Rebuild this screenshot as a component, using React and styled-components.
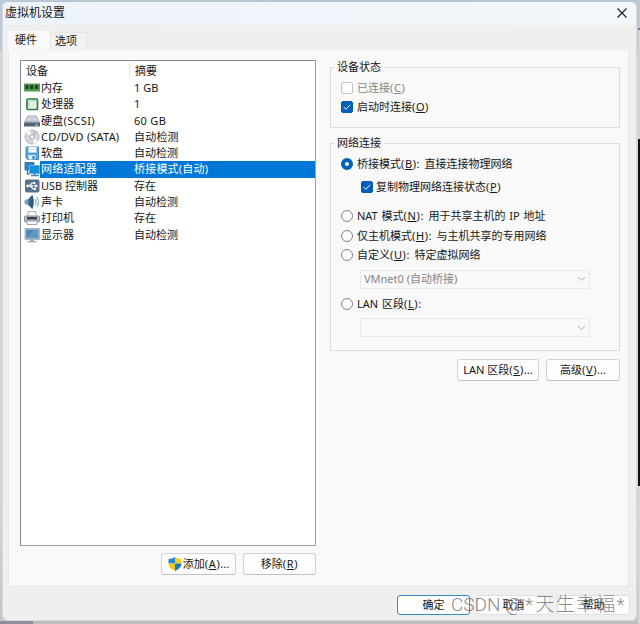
import styled, { createGlobalStyle, css } from 'styled-components';

const devices = [
  { icon: 'memory', name: '内存', summary: '1 GB' },
  { icon: 'cpu', name: '处理器', summary: '1' },
  { icon: 'disk', name: '硬盘(SCSI)', summary: '60 GB', tracking: 0.3 },
  { icon: 'cd', name: 'CD/DVD (SATA)', summary: '自动检测', tracking: 0.2 },
  { icon: 'floppy', name: '软盘', summary: '自动检测' },
  { icon: 'network', name: '网络适配器', summary: '桥接模式(自动)', tracking: 0.2, selected: true },
  { icon: 'usb', name: 'USB 控制器', summary: '存在' },
  { icon: 'sound', name: '声卡', summary: '自动检测' },
  { icon: 'printer', name: '打印机', summary: '存在' },
  { icon: 'display', name: '显示器', summary: '自动检测' },
];

const drawings = {
  memory: (
    <>
      <path d="M0 3.5h16v8H0z" fill="#4f9d50" />
      <path d="M1.5 5h3v4h-3zM6.2 5h3v4h-3zM11 5h3v4h-3z" fill="#1f4425" />
      <path d="M1 11.5h14" stroke="#b5c88a" strokeDasharray="1 1" />
    </>
  ),
  cpu: (
    <>
      <rect x="3" y="3" width="10.5" height="10.5" rx="1" fill="#e3efe1" stroke="#238048" strokeWidth="1.7" />
      <path d="M5 11V5h6" fill="none" stroke="#b5d3b5" />
    </>
  ),
  disk: (
    <>
      <path d="M3.5 2.5h9L16 9.5H0z" fill="#a5b2c0" />
      <path d="M4 3.5h8l2 4.5h-12z" fill="#c9d2dc" />
      <path d="M0 9h16v4.5H0z" fill="#566472" />
      <path d="M0 9.5h16" stroke="#8c9ba9" />
      <path d="M11 12h3" stroke="#c9d9e4" />
    </>
  ),
  cd: (
    <>
      <circle cx="8" cy="8" r="7" fill="#d5d8dc" stroke="#b1b5bc" />
      <path d="M8 8L2 4a7 7 0 0 1 4-3zM8 8l6 4a7 7 0 0 1-4 3z" fill="#f7f8fa" />
      <path d="M8 8l5.5-4A7 7 0 0 0 10 1.5z" fill="#bfc2ce" />
      <circle cx="8" cy="8" r="2.4" fill="#edf0f3" stroke="#a5aab2" />
      <circle cx="8" cy="8" r=".8" fill="#fff" />
    </>
  ),
  floppy: (
    <>
      <path d="M2 2h12.5v12.5h-11L2 13z" fill="#5ba3dd" stroke="#3d8ac9" />
      <path d="M4.5 2h8v5.5h-8z" fill="#fff" />
      <path d="M5 4h7" stroke="#d3e4f2" />
      <path d="M4.5 10h7v4.5h-7z" fill="#e2eff9" />
      <path d="M8.5 11h2v3.5h-2z" fill="#3277b8" />
    </>
  ),
  network: (
    <>
      <path d="M1 1.5h9V9H1z" fill="#2b83c2" stroke="#3a78a8" />
      <path d="M5.5 4.5h10v8h-10z" fill="#168ed9" stroke="#5db4e8" />
      <path d="M10.5 12v2M7 14.5h8M3.5 9v4h2" stroke="#4a84b0" strokeWidth="1.5" fill="none" />
    </>
  ),
  usb: (
    <>
      <rect x="1" y="1.5" width="14.5" height="13" rx="2" fill="#56708a" />
      <path d="M3.5 8h9M5.5 8l2.5-3h2M6.5 8l2.5 3h2" stroke="#fff" strokeWidth="1.2" fill="none" />
      <path d="M11.5 6l2.5 2-2.5 2zM9.3 4h2v2h-2zM10 10h2v2h-2z" fill="#fff" />
      <circle cx="3.7" cy="8" r="1.4" fill="#fff" />
    </>
  ),
  sound: (
    <>
      <path d="M1 5.5Q0 8 1 10.5h2.5L8.5 15V1L3.5 5.5z" fill="#7ba0bf" />
      <path d="M4 5.5L8.5 1v14L4 10.5z" fill="#3f6f9a" />
      <ellipse cx="8" cy="8" rx="1.7" ry="6.5" fill="#2d5680" />
      <path d="M11 5q2 3 0 6M12.8 3q3.4 5 0 10" fill="none" stroke="#82b4d8" strokeWidth="1.3" />
    </>
  ),
  printer: (
    <>
      <path d="M4 1.5h8V7H4z" fill="#f8f9fb" stroke="#abb0b8" />
      <rect x=".5" y="6" width="15" height="6" rx="1" fill="#b4bac2" stroke="#8a919b" />
      <path d="M3 7h10v2.5H3z" fill="#3c434c" />
      <path d="M3 11h10v3.5H3z" fill="#f4f6f8" stroke="#9da3ac" />
    </>
  ),
  display: (
    <>
      <path d="M1 1.5h14.5v11H1z" fill="#8fb0c8" stroke="#a3b8c6" />
      <path d="M2.5 3h11.5v8h-11.5z" fill="#4784b2" />
      <path d="M2.5 11l7-8h4.5v8z" fill="#5f98c1" />
      <path d="M6 12.5h4V14H6zM3.5 14h9v1.2h-9z" fill="#9dadb9" />
    </>
  ),
};

const DeviceIcon = ({ name }) => (
  <svg width="16" height="16" viewBox="0 0 16 16">{drawings[name]}</svg>
);

const Shield = () => (
  <svg width="14" height="14" viewBox="0 0 14 14">
    <path d="M7 0Q4 2 .5 2v4.5H7z" fill="#2788d1" />
    <path d="M7 0q3 2 6.5 2v4.5H7z" fill="#f9cf1d" />
    <path d="M.5 6.5H7V14Q1 11.5.5 6.5z" fill="#f5c51c" />
    <path d="M7 6.5h6.5Q13 11.5 7 14z" fill="#1878c5" />
  </svg>
);

const Tick = () => (
  <svg width="12" height="12" viewBox="0 0 12 12">
    <path d="M2.7 6.1l2.2 2.2 4.3-4.5" fill="none" stroke="#fff" strokeWidth="1" />
  </svg>
);

const Chevron = () => (
  <svg width="9" height="6" viewBox="0 0 9 6">
    <path d="M1 1l3.5 3.5L8 1" fill="none" stroke="#b4b4b4" />
  </svg>
);

// label text with its mnemonic letter underlined
const Mnemonic = ({ before, letter, colon, after = '' }) => (
  <span>
    {before}
    <Key>(<u>{letter}</u>){colon && ': '}</Key>
    {after}
  </span>
);

const Check = ({ checked, disabled, children }) => (
  <Option $disabled={disabled}>
    <CheckMark $checked={checked}>{checked && <Tick />}</CheckMark>
    {children}
  </Option>
);

const Radio = ({ checked, children }) => (
  <Option>
    <RadioMark $checked={checked} />
    {children}
  </Option>
);

const App = () => (
  <>
    <GlobalStyle />
    <Desktop>
      <Dialog>
        <TitleBar>
          虚拟机设置
          <svg width="10" height="10" viewBox="0 0 10 10">
            <path d="M.5.5l9 9M9.5.5l-9 9" stroke="#222" strokeWidth="1.2" />
          </svg>
        </TitleBar>
        <Tabs>
          <Tab $active>硬件</Tab>
          <Tab>选项</Tab>
        </Tabs>
        <Panel>
          <Hardware>
            <DeviceList>
              <ListHeader>
                <span>设备</span>
                <span>摘要</span>
              </ListHeader>
              {devices.map((device) => (
                <Row key={device.icon}>
                  <DeviceIcon name={device.icon} />
                  <Cells $selected={device.selected} $tracking={device.tracking}>
                    <span>{device.name}</span>
                    <span>{device.summary}</span>
                  </Cells>
                </Row>
              ))}
            </DeviceList>
            <ListButtons>
              <Button $width={75}><Shield /><Mnemonic before="添加" letter="A" after="..." /></Button>
              <Button $width={73}><Mnemonic before="移除" letter="R" /></Button>
            </ListButtons>
          </Hardware>
          <Settings>
            <Group $height={68}>
              <legend>设备状态</legend>
              <Options>
                <Check disabled><Mnemonic before="已连接" letter="C" /></Check>
                <Check checked><Mnemonic before="启动时连接" letter="O" /></Check>
              </Options>
            </Group>
            <Group $height={215}>
              <legend>网络连接</legend>
              <Options>
                <Radio checked><Mnemonic before="桥接模式" letter="B" colon after="直接连接物理网络" /></Radio>
                <Replicate>
                  <Check checked><Mnemonic before="复制物理网络连接状态" letter="P" /></Check>
                </Replicate>
                <Radio><Mnemonic before="NAT 模式" letter="N" colon after="用于共享主机的 IP 地址" /></Radio>
                <Radio><Mnemonic before="仅主机模式" letter="H" colon after="与主机共享的专用网络" /></Radio>
                <Radio><Mnemonic before="自定义" letter="U" colon after="特定虚拟网络" /></Radio>
                <Combo>VMnet0 (自动桥接)<Chevron /></Combo>
                <Radio><Mnemonic before="LAN 区段" letter="L" colon /></Radio>
                <Combo><span /><Chevron /></Combo>
              </Options>
            </Group>
            <SettingsButtons>
              <Button $width={82}><Mnemonic before="LAN 区段" letter="S" after="..." /></Button>
              <Button $width={74}><Mnemonic before="高级" letter="V" after="..." /></Button>
            </SettingsButtons>
          </Settings>
        </Panel>
        <Footer>
          <FooterButton $primary>确定</FooterButton>
          <FooterButton>取消</FooterButton>
          <FooterButton>帮助</FooterButton>
        </Footer>
      </Dialog>
      <Watermark>CSDN <i>@*</i><span>天生幸福</span>*</Watermark>
    </Desktop>
  </>
);

const GlobalStyle = createGlobalStyle`
  * {
    box-sizing: border-box;
  }
  body {
    margin: 0;
    overflow: hidden;
    font-family: 'Noto Sans', 'Noto Sans CJK SC', sans-serif;
    font-size: 11px;
    line-height: 16px;
    color: #171717;
    white-space: nowrap;
  }
  svg {
    display: block;
    flex-shrink: 0;
  }
  u {
    text-underline-offset: 1px;
  }
`
const Desktop = styled.div`
  position: relative;
  width: 640px;
  height: 624px;
  padding: 1px 3px 3px 2px;
  background:
    linear-gradient(#c3c9d2 0 28px, #777b83 28px 30px, #d2d2d9 30px 139px, #111 139px 486px, #d5d5dc 486px) right / 2px 100% no-repeat,
    linear-gradient(90deg, #8f8f9b 0 33px, #bcbcc1 33px) bottom / 100% 3px no-repeat,
    linear-gradient(#b9c9da 0 50px, #d4d5d8 52px 500px, #c4c4c8);
`
const Dialog = styled.div`
  display: flex;
  flex-direction: column;
  height: 620px;
  border: 1px solid #d8dade;
  border-top-color: #b8c2cd;
  border-radius: 6px;
  background: #efefef;
  overflow: hidden;
`
const TitleBar = styled.div`
  display: flex;
  align-items: center;
  justify-content: space-between;
  height: 23px;
  padding: 0 9px 2px 2px;
  font-size: 12px;
  background: linear-gradient(90deg, #edf3f9, #f2f7fb);
`
const Tabs = styled.div`
  display: flex;
  align-items: flex-end;
  height: 25px;
  padding-left: 5px;
`
const Tab = styled.div`
  width: ${(props) => (props.$active ? '42px' : '37px')};
  height: ${(props) => (props.$active ? '19px' : '18px')};
  padding-left: ${(props) => (props.$active ? '6px' : '4px')};
  border: 1px solid ${(props) => (props.$active ? '#f9f9f9' : '#e5e5e5')};
  border-bottom: 0;
  background: ${(props) => (props.$active ? '#f9f9f9' : '#f2f2f2')};
`
const Panel = styled.div`
  display: flex;
  gap: 14px;
  height: 537px;
  margin: 0 7px 0 5px;
  padding: 9px 8px 0 11px;
  border: 1px solid #e7e7e7;
  border-top-color: #f4f4f4;
  background: #f9f9f9;
`
const Hardware = styled.div`
  width: 297px;
`
const DeviceList = styled.div`
  height: 486px;
  padding-top: 2px;
  border: 1px solid #8a8f98;
  border-color: #858a92 #a2a2a2 #a2a2a2 #858a92;
  background: #fff;
`
const columns = css`
  display: grid;
  grid-template-columns: 93px 1fr;
  align-items: center;
`
const ListHeader = styled.div`
  ${columns}
  grid-template-columns: 108px 1fr;
  height: 17px;
  padding: 0 0 2px 5px;

  span + span {
    margin-left: -5px;
    padding-left: 5px;
    border-left: 1px solid #e7e7e7;
  }
`
const Row = styled.div`
  display: flex;
  align-items: center;
  height: 16.27px;
  padding-left: 3px;
`
const Cells = styled.div`
  ${columns}
  flex: 1;
  height: 100%;
  padding-left: 1px;
  letter-spacing: ${(props) => props.$tracking || 0}px;
  color: ${(props) => (props.$selected ? '#fff' : '#171717')};
  background: ${(props) => (props.$selected ? '#0078d7' : 'transparent')};
`
const Key = styled.span`
  letter-spacing: 0.6px;
  white-space: pre;
`
const Button = styled.div`
  display: flex;
  align-items: center;
  justify-content: center;
  gap: 1px;
  width: ${(props) => props.$width}px;
  height: 22px;
  border: 1px solid #d2d2d2;
  border-bottom-color: #c2c2c2;
  border-radius: 3px;
  background: #fdfdfd;
`
const ListButtons = styled.div`
  display: flex;
  justify-content: flex-end;
  gap: 7px;
  padding-top: 7px;
`
const Settings = styled.div`
  width: 291px;
`
const Group = styled.fieldset`
  height: ${(props) => props.$height}px;
  margin: 0 0 8px;
  padding: 0;
  border: 1px solid #dcdcdc;

  legend {
    height: 14px;
    margin-left: 4px;
    padding: 0 3px 0 2px;
    line-height: 14px;
  }
`
const Options = styled.div`
  padding: 4px 0 0 10px;
`
const Option = styled.div`
  display: flex;
  align-items: center;
  gap: 4px;
  height: 19.4px;
  word-spacing: 1px;
  color: ${(props) => (props.$disabled ? '#858585' : '#171717')};
`
const CheckMark = styled.span`
  display: flex;
  align-items: center;
  justify-content: center;
  width: 12px;
  height: 12px;
  border: 1px solid ${(props) => (props.$checked ? '#005fb8' : '#c6c6c6')};
  border-radius: 2px;
  background: ${(props) => (props.$checked ? '#005fb8' : '#fbfbfb')};
`
const RadioMark = styled.span`
  width: 12px;
  height: 12px;
  border: ${(props) => (props.$checked ? '4px solid #005fb8' : '1px solid #868686')};
  border-radius: 50%;
  background: #fafafa;
`
const Replicate = styled.div`
  padding: 4px 0 10px 20px;

  ${Option} {
    gap: 3px;
  }
`
const Combo = styled.div`
  display: flex;
  align-items: center;
  justify-content: space-between;
  width: 230px;
  height: 19px;
  margin: 5px 0 5px 19px;
  padding: 0 3px;
  border: 1px solid #e8e8e8;
  color: #858585;
`
const SettingsButtons = styled.div`
  display: flex;
  justify-content: flex-end;
  gap: 7px;
`
const Footer = styled.div`
  display: flex;
  justify-content: flex-end;
  gap: 7px;
  padding: 8px 6px 0 0;
`
const FooterButton = styled(Button)`
  width: 73px;
  height: 20px;
  border-color: ${(props) => (props.$primary ? '#3589c9' : '#dfdfdf')};
`
const Watermark = styled.div`
  position: absolute;
  left: 451px;
  top: 593px;
  font-family: Roboto, 'Noto Sans CJK SC', sans-serif;
  font-size: 19px;
  font-weight: 300;
  line-height: 24px;
  color: rgba(110, 110, 110, 0.8);

  i {
    font-style: normal;
    letter-spacing: 2.5px;
  }
  span {
    letter-spacing: 1.2px;
  }
`

export default App;
